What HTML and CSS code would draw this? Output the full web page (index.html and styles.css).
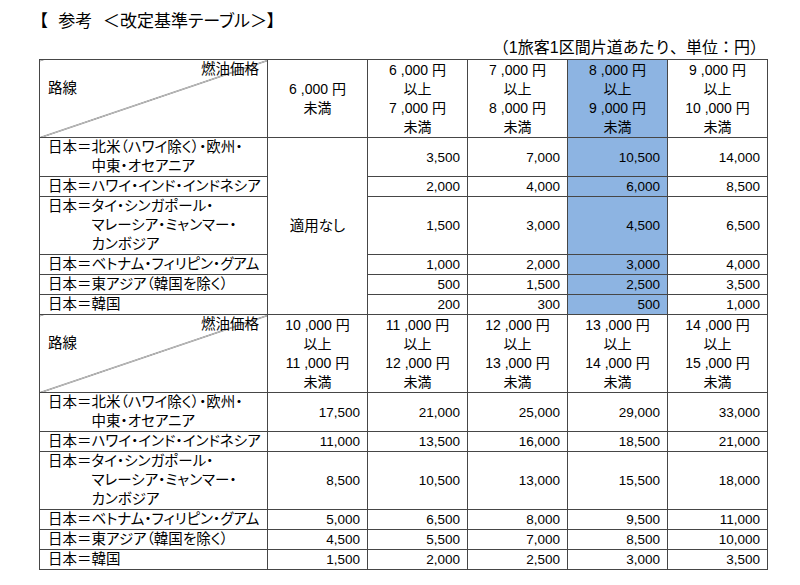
FILE: index.html
```html
<!DOCTYPE html>
<html lang="ja">
<head>
<meta charset="utf-8">
<title>改定基準テーブル</title>
<link rel="stylesheet" href="styles.css">
</head>
<body>
<div class="page">
  <h1 class="title">【 参考 ＜改定基準テーブル＞】</h1>
  <p class="unit">（1旅客1区間片道あたり、単位：円）</p>
  <table class="fare">
    <colgroup>
      <col class="c-route"><col class="c-p"><col class="c-p"><col class="c-p"><col class="c-p"><col class="c-p">
    </colgroup>
    <tbody>
      <tr class="head">
        <th class="diag"><div class="fuel">燃油価格</div><div class="rosen">路線</div></th>
        <th class="price">6 ,000 円<br>未満</th>
        <th class="price">6 ,000 円<br>以上<br>7 ,000 円<br>未満</th>
        <th class="price">7 ,000 円<br>以上<br>8 ,000 円<br>未満</th>
        <th class="price hl">8 ,000 円<br>以上<br>9 ,000 円<br>未満</th>
        <th class="price">9 ,000 円<br>以上<br>10 ,000 円<br>未満</th>
      </tr>
      <tr>
        <td class="route"><div class="rl"><span class="pre">日本＝</span><span>北米（ハワイ除く）・欧州・<br>中東・オセアニア</span></div></td>
        <td class="na" rowspan="6">適用なし</td>
        <td class="num">3,500</td><td class="num">7,000</td><td class="num hl">10,500</td><td class="num">14,000</td>
      </tr>
      <tr>
        <td class="route">日本＝ハワイ・インド・インドネシア</td>
        <td class="num">2,000</td><td class="num">4,000</td><td class="num hl">6,000</td><td class="num">8,500</td>
      </tr>
      <tr>
        <td class="route"><div class="rl"><span class="pre">日本＝</span><span>タイ・シンガポール・<br>マレーシア・ミャンマー・<br>カンボジア</span></div></td>
        <td class="num">1,500</td><td class="num">3,000</td><td class="num hl">4,500</td><td class="num">6,500</td>
      </tr>
      <tr>
        <td class="route">日本＝ベトナム・フィリピン・グアム</td>
        <td class="num">1,000</td><td class="num">2,000</td><td class="num hl">3,000</td><td class="num">4,000</td>
      </tr>
      <tr>
        <td class="route">日本＝東アジア（韓国を除く）</td>
        <td class="num">500</td><td class="num">1,500</td><td class="num hl">2,500</td><td class="num">3,500</td>
      </tr>
      <tr>
        <td class="route">日本＝韓国</td>
        <td class="num">200</td><td class="num">300</td><td class="num hl">500</td><td class="num">1,000</td>
      </tr>
      <tr class="head">
        <th class="diag"><div class="fuel">燃油価格</div><div class="rosen">路線</div></th>
        <th class="price">10 ,000 円<br>以上<br>11 ,000 円<br>未満</th>
        <th class="price">11 ,000 円<br>以上<br>12 ,000 円<br>未満</th>
        <th class="price">12 ,000 円<br>以上<br>13 ,000 円<br>未満</th>
        <th class="price">13 ,000 円<br>以上<br>14 ,000 円<br>未満</th>
        <th class="price">14 ,000 円<br>以上<br>15 ,000 円<br>未満</th>
      </tr>
      <tr>
        <td class="route"><div class="rl"><span class="pre">日本＝</span><span>北米（ハワイ除く）・欧州・<br>中東・オセアニア</span></div></td>
        <td class="num">17,500</td><td class="num">21,000</td><td class="num">25,000</td><td class="num">29,000</td><td class="num">33,000</td>
      </tr>
      <tr>
        <td class="route">日本＝ハワイ・インド・インドネシア</td>
        <td class="num">11,000</td><td class="num">13,500</td><td class="num">16,000</td><td class="num">18,500</td><td class="num">21,000</td>
      </tr>
      <tr>
        <td class="route"><div class="rl"><span class="pre">日本＝</span><span>タイ・シンガポール・<br>マレーシア・ミャンマー・<br>カンボジア</span></div></td>
        <td class="num">8,500</td><td class="num">10,500</td><td class="num">13,000</td><td class="num">15,500</td><td class="num">18,000</td>
      </tr>
      <tr>
        <td class="route">日本＝ベトナム・フィリピン・グアム</td>
        <td class="num">5,000</td><td class="num">6,500</td><td class="num">8,000</td><td class="num">9,500</td><td class="num">11,000</td>
      </tr>
      <tr>
        <td class="route">日本＝東アジア（韓国を除く）</td>
        <td class="num">4,500</td><td class="num">5,500</td><td class="num">7,000</td><td class="num">8,500</td><td class="num">10,000</td>
      </tr>
      <tr>
        <td class="route">日本＝韓国</td>
        <td class="num">1,500</td><td class="num">2,000</td><td class="num">2,500</td><td class="num">3,000</td><td class="num">3,500</td>
      </tr>
    </tbody>
  </table>
</div>
</body>
</html>
```
FILE: styles.css
```css
html, body {
  margin: 0;
  padding: 0;
  background: #ffffff;
}

body {
  font-family: "Liberation Sans", "Noto Sans CJK JP", sans-serif;
  color: #000;
  font-feature-settings: "palt";
}

.page {
  width: 727px;
  margin-left: 39px;
  padding-top: 12px;
}

.title {
  margin: 0;
  font-size: 17px;
  font-weight: normal;
  line-height: 20px;
  height: 20px;
  word-spacing: 6px;
}

.unit {
  margin: 6px 0 1px 0;
  text-align: right;
  font-size: 16px;
  line-height: 20px;
  font-feature-settings: normal;
}

.fare {
  border-collapse: collapse;
  table-layout: fixed;
  width: 727px;
  font-size: 14px;
  line-height: 19px;
}

.c-route { width: 228px; }
.c-p { width: 100px; }

.fare th,
.fare td {
  border: 1px solid #464646;
  padding: 0;
  font-weight: normal;
  white-space: nowrap;
}

.head {
  height: 78px;
}

.diag {
  vertical-align: top;
  text-align: left;
  background: linear-gradient(to bottom right,
    transparent calc(50% - 0.7px),
    #333 50%,
    transparent calc(50% + 0.7px));
}

.fuel {
  text-align: right;
  padding-right: 8px;
  font-size: 14.5px;
}

.rosen {
  padding-left: 8px;
  font-size: 14.5px;
}

.price {
  text-align: center;
  vertical-align: middle;
  font-size: 14px;
}

.route {
  text-align: left;
  vertical-align: top;
  padding-left: 8px !important;
  font-size: 14.5px;
}

.rl {
  display: flex;
}

.na {
  text-align: center;
  vertical-align: middle;
  font-size: 14.5px;
}

.num {
  text-align: right;
  vertical-align: middle;
  padding-right: 7px !important;
  font-size: 13.5px;
}

.hl {
  background: #8db4e2;
}
```
